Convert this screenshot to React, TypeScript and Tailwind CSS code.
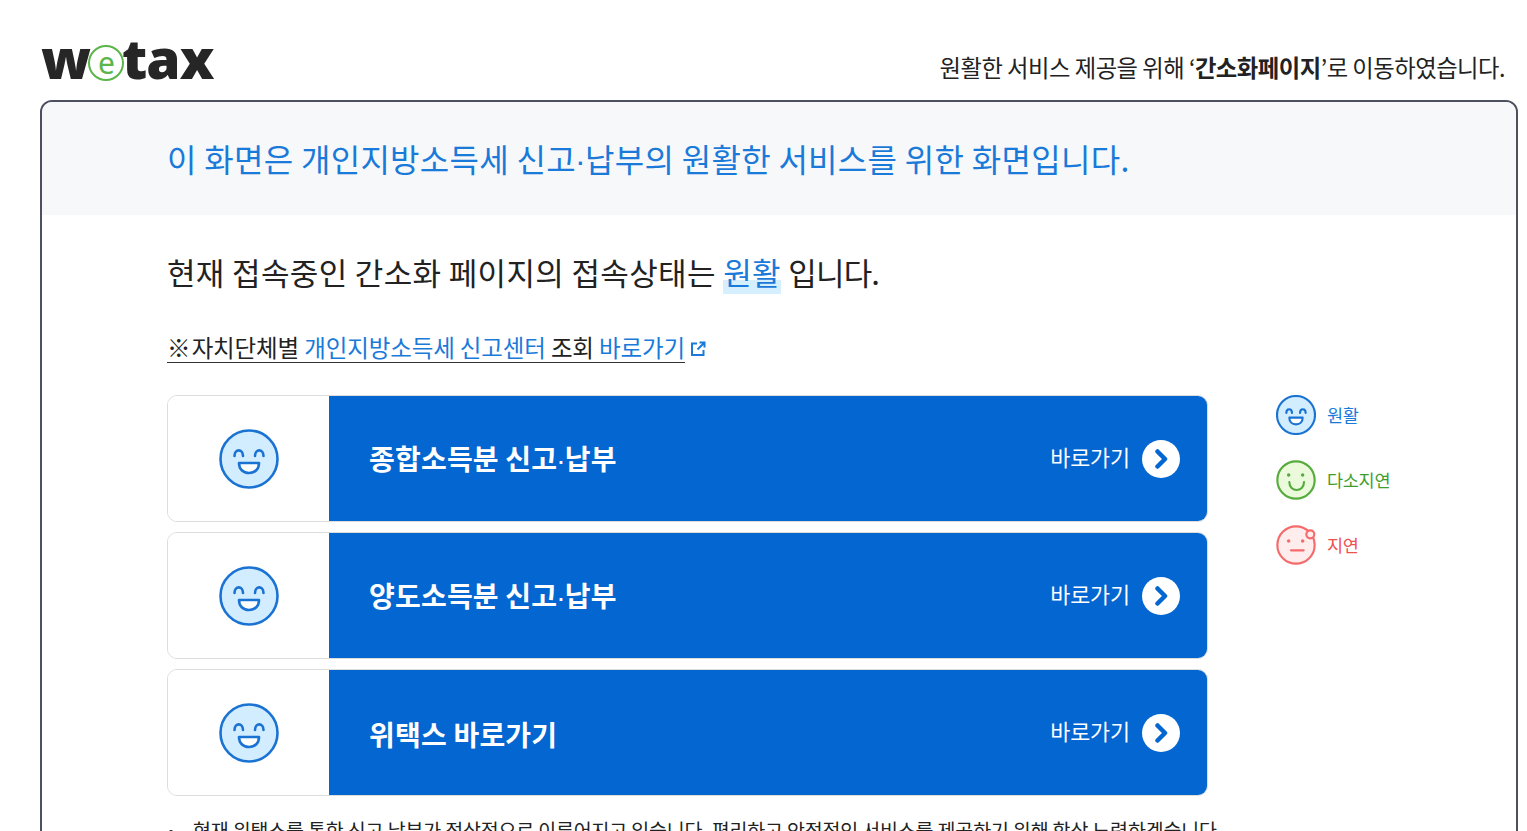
const font = { fontFamily: '"Noto Sans CJK KR", "Noto Sans", sans-serif' }

function Dot() {
  return <span className="mx-[-1px] font-['Liberation_Sans'] font-normal">·</span>
}

function SmileFace({ size, stroke = 2.6 }: { size: number; stroke?: number }) {
  return (
    <svg width={size} height={size} viewBox="0 0 60 60" fill="none">
      <circle cx="30" cy="30" r="28.5" fill="#d2edff" stroke="#1a73d2" strokeWidth={stroke} />
      <path d="M15.5 27c0-7.500 8.500-7.500 8.500 0M36 27c0-7.500 8.500-7.500 8.500 0" stroke="#1a73d2" strokeWidth={stroke} strokeLinecap="round" />
      <path d="M20 34h20c0 6-4 10-10 10S20 40 20 34z" fill="#fff" stroke="#1a73d2" strokeWidth={stroke} strokeLinejoin="round" />
    </svg>
  )
}

function MildFace({ size }: { size: number }) {
  return (
    <svg width={size} height={size} viewBox="0 0 60 60" fill="none">
      <circle cx="30" cy="30" r="28" fill="#ecfadc" stroke="#55ab3c" strokeWidth="3.200" />
      <circle cx="19" cy="22.500" r="2.600" fill="#55ab3c" />
      <circle cx="40" cy="22.500" r="2.600" fill="#55ab3c" />
      <path d="M20 33c0 16 22 16 22 0" stroke="#55ab3c" strokeWidth="3.200" strokeLinecap="round" />
    </svg>
  )
}

function SlowFace({ size }: { size: number }) {
  return (
    <svg width={size} height={size} viewBox="0 0 60 60" fill="none">
      <circle cx="30" cy="30" r="28" fill="#ffecec" stroke="#f56a6a" strokeWidth="3.200" />
      <circle cx="19" cy="24" r="2.600" fill="#f56a6a" />
      <circle cx="40" cy="24" r="2.600" fill="#f56a6a" />
      <path d="M22.500 38h19" stroke="#f56a6a" strokeWidth="3.200" strokeLinecap="round" />
      <circle cx="51.500" cy="14" r="6" fill="#ffecec" stroke="#f56a6a" strokeWidth="3.200" />
    </svg>
  )
}

const rows = [
  <>종합소득분 신고<Dot />납부</>,
  <>양도소득분 신고<Dot />납부</>,
  <>위택스 바로가기</>,
]

function ServiceRow({ title }: { title: React.ReactNode }) {
  return (
    <a className="flex h-[127px] w-[1041px] overflow-hidden rounded-[10px] border border-[#dddddd]">
      <div className="flex w-[161px] shrink-0 items-center justify-center bg-white">
        <SmileFace size={60} />
      </div>
      <div className="flex flex-1 items-center justify-between bg-[#0366d1] pl-10 pr-[27px] text-white">
        <strong className="pt-[2px] text-[28px] font-bold tracking-[0.2px]">{title}</strong>
        <span className="flex items-center gap-[12px] text-[21.800px] tracking-[-0.1px]">
          <span className="mt-[-2px]">바로가기</span>
          <span className="flex h-[38px] w-[38px] items-center justify-center rounded-full bg-white">
            <svg width="14" height="20" viewBox="0 0 14 20" fill="none">
              <path d="M3.500 2.500l7.500 7.500-7.500 7.500" stroke="#0366d1" strokeWidth="4.500" strokeLinecap="round" strokeLinejoin="round" />
            </svg>
          </span>
        </span>
      </div>
    </a>
  )
}

export default function App() {
  return (
    <div className="h-[831px] overflow-hidden bg-white text-[#222222]" style={font}>
      <header className="flex h-[100px] items-end justify-between pb-[17px] pl-[41px] pr-[22px]">
        {/* logo */}
        <div className="mb-[-3px] flex items-center font-['Noto_Sans'] text-[55px] font-black leading-[56px] tracking-[-1px] text-[#262626]">
          <span>w</span>
          <span className="mx-[-2px] mt-[9px] flex h-[36px] w-[36px] items-center justify-center rounded-full border-[2.500px] border-[#5cb54a] text-[30px] font-normal leading-none text-[#5cb54a]">
            e
          </span>
          <span>tax</span>
        </div>
        <p className="text-[23.300px] leading-[32px] tracking-[-0.48px]">
          원활한 서비스 제공을 위해 ‘<strong className="font-bold">간소화페이지</strong>’로 이동하였습니다.
        </p>
      </header>

      <main className="mx-[40px] h-[900px] w-[1478px] rounded-[12px] border-2 border-[#4d5060]">
        <div className="flex h-[113px] items-center rounded-t-[10px] bg-[#f7f8fa] pl-[125px] pt-[1px]">
          <h1 className="text-[32px] font-normal tracking-[0.3px] text-[#1a7ad9]">
            이 화면은 개인지방소득세 신고<Dot />납부의 원활한 서비스를 위한 화면입니다.
          </h1>
        </div>

        <div className="pl-[125px] pt-[34px]">
          <p className="text-[31px] leading-[46px] tracking-[0.35px] text-[#222222]">
            현재 접속중인 간소화 페이지의 접속상태는{" "}
            <span className="bg-[linear-gradient(transparent_70%,#d6efff_70%)] text-[#1a7ad9]">원활</span>{" "}
            <span className="tracking-[-0.8px]">입니다.</span>
          </p>

          <p className="mt-[37px] flex items-center text-[23.500px] leading-[34px] tracking-[-0.13px]">
            <span className="border-b-[1.500px] border-[#333333] leading-[30px]">
              <span className="tracking-[-4px]">※</span> 자치단체별 <span className="text-[#1a7ad9]">개인지방소득세 신고센터</span> 조회{" "}
              <span className="text-[#1a7ad9]">바로가기</span>
            </span>
            <svg className="ml-[5px] mt-[3px]" width="16" height="16" viewBox="0 0 16 16" fill="none">
              <path d="M7 2.500H2v11.500h11.500V9M9.500 1.500h5v5M14 2L7.500 8.500" stroke="#1a7ad9" strokeWidth="2" />
            </svg>
          </p>

          <div className="mt-[32px] flex">
            <div className="flex flex-col gap-[10px]">
              {rows.map((title, i) => (
                <ServiceRow key={i} title={title} />
              ))}
            </div>
            <ul className="ml-[68px] flex flex-col gap-[25px] text-[17.500px] tracking-[-0.3px]">
              <li className="flex items-center gap-[11px] text-[#1a7ad9]">
                <SmileFace size={40} stroke={3.2} />
                원활
              </li>
              <li className="flex items-center gap-[11px] text-[#3f9e2b]">
                <MildFace size={40} />
                다소지연
              </li>
              <li className="flex items-center gap-[11px] text-[#f0504f]">
                <SlowFace size={40} />
                지연
              </li>
            </ul>
          </div>

          <div className="mt-[20px] flex items-start text-[19.500px] leading-[28px] tracking-[-0.17px]">
            <span className="ml-[2px] mr-[20px] mt-[14px] h-[4px] w-[4px] shrink-0 rounded-full bg-[#222222]" />
            <p className="whitespace-nowrap">
              현재 위택스를 통한 신고<Dot />납부가 정상적으로 이루어지고 있습니다. 편리하고 안정적인 서비스를 제공하기 위해 항상 노력하겠습니다.
            </p>
          </div>
        </div>
      </main>
    </div>
  )
}
